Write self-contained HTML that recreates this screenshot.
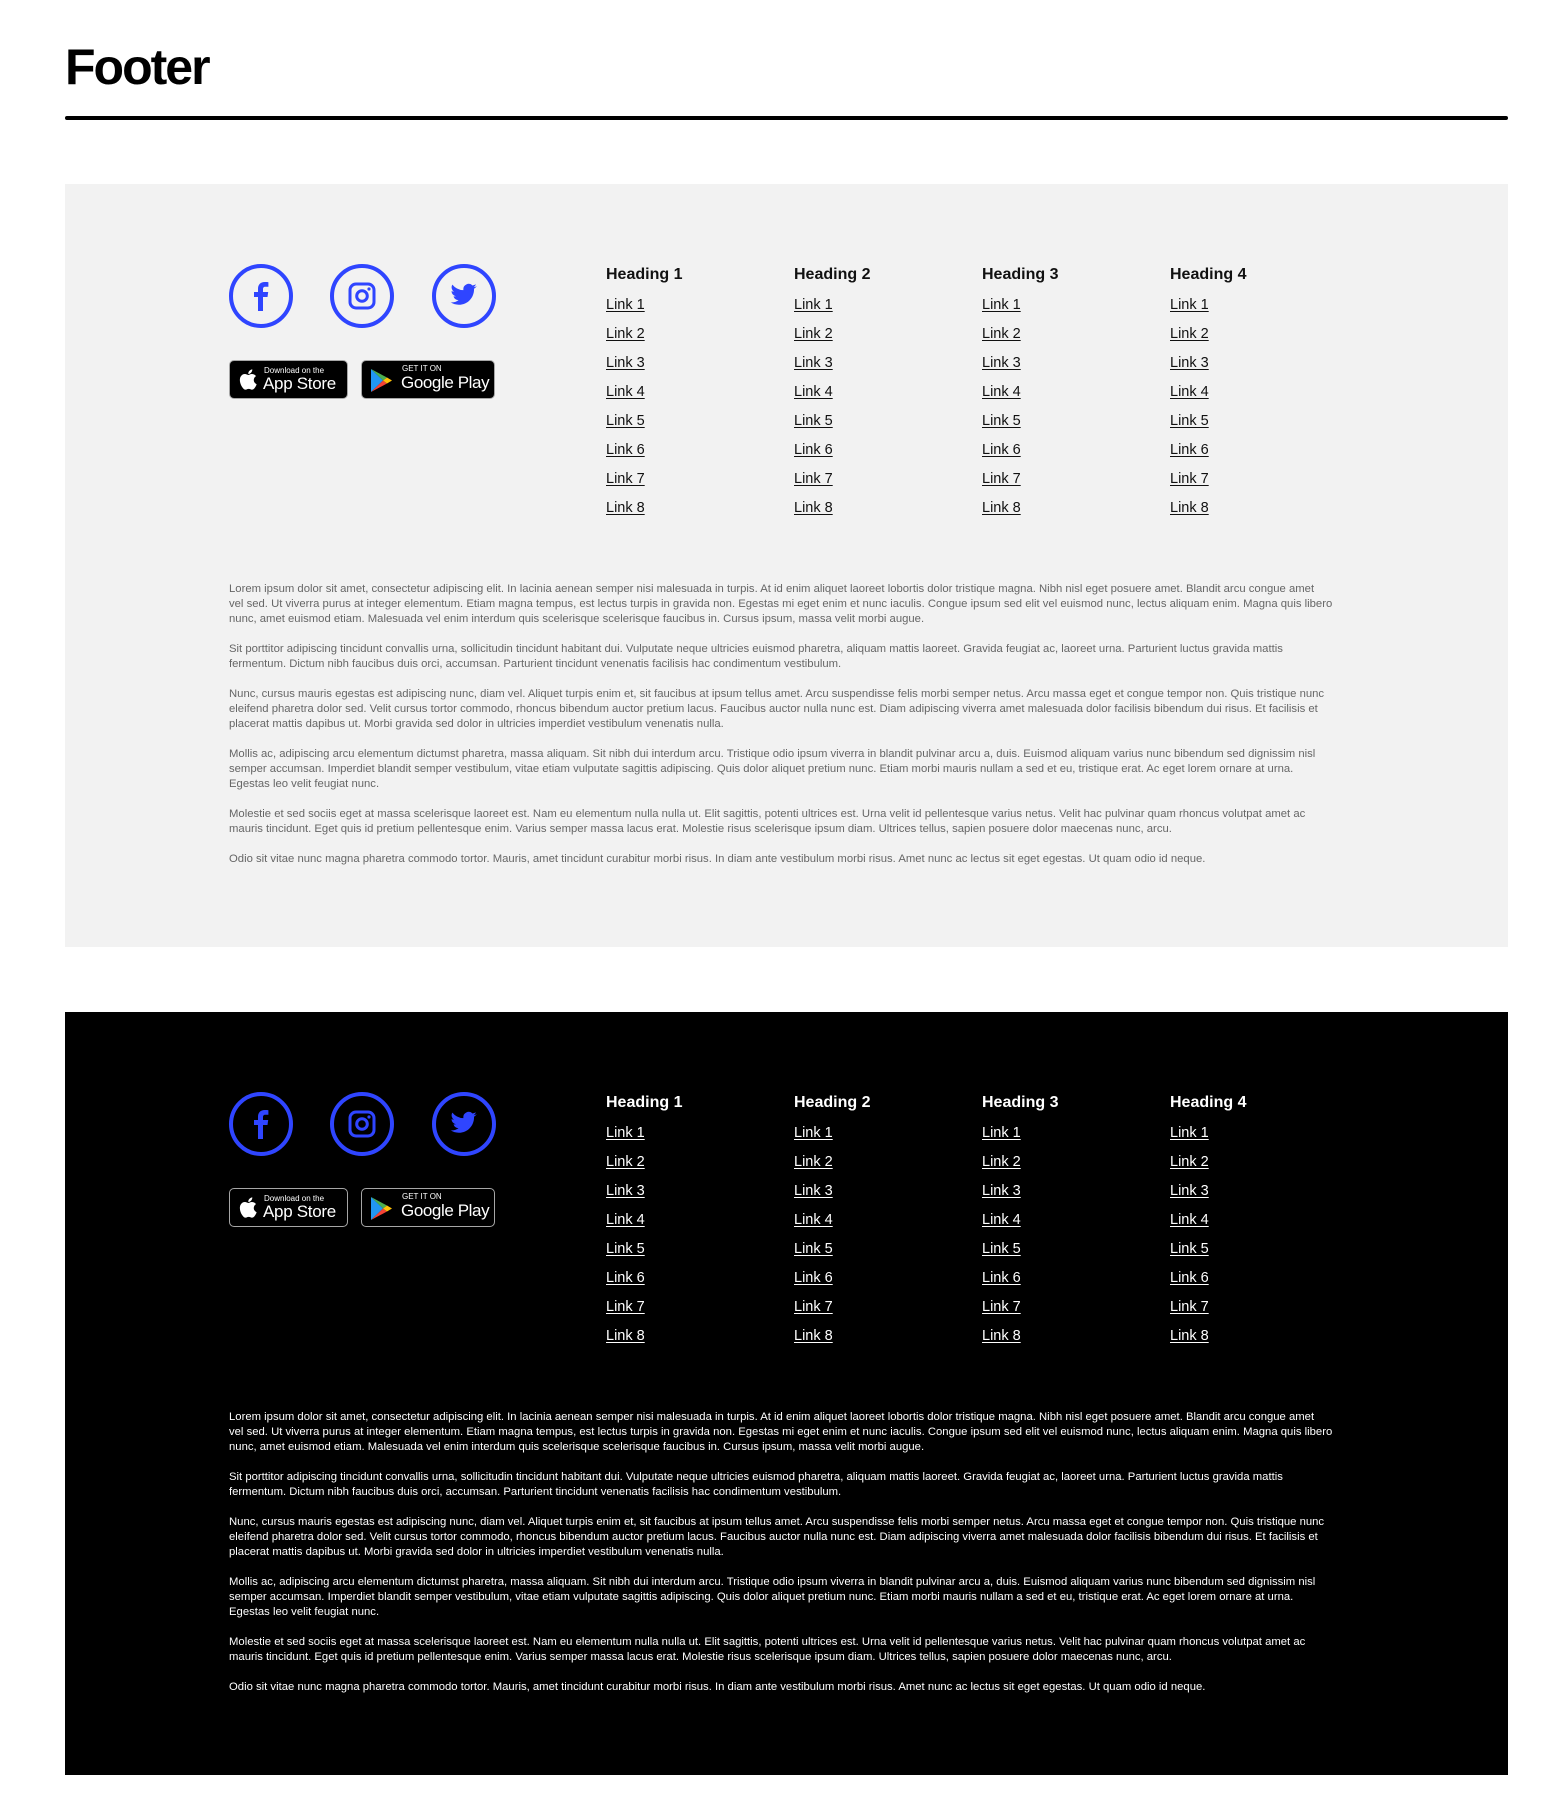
<!DOCTYPE html>
<html><head><meta charset="utf-8"><style>
*{margin:0;padding:0;box-sizing:border-box}
body{width:1568px;height:1802px;background:#fff;font-family:"Liberation Sans",sans-serif;position:relative;overflow:hidden}
h1{position:absolute;left:65px;top:38px;font-size:50px;font-weight:bold;letter-spacing:-2px;color:#000}
.rule{position:absolute;left:65px;top:116px;width:1443px;height:4px;background:#000;border-radius:2px}
.box{position:absolute;left:65px;width:1443px;height:763px}
.light{top:184px;background:#f2f2f2;color:#111}
.dark{top:1012px;background:#000;color:#fff}
.circ{position:absolute;top:80px;width:64px;height:64px;border:4px solid #2f45ff;border-radius:50%;display:flex;align-items:center;justify-content:center}
.badge{position:absolute;top:176px;height:39px;background:#000;border-radius:5px;border:1px solid #a6a6a6;color:#fff}
.col{position:absolute;top:81px}
.col h3{font-size:16px;font-weight:600;margin-top:0;height:26px;line-height:20px}
.col a{display:block;font-size:14.5px;line-height:29px;height:29px;color:inherit;text-decoration:underline;text-underline-offset:2px}
.txt{position:absolute;left:164px;top:398px;font-size:11.3px;line-height:15px;white-space:nowrap}
.light .txt{color:#666}
.txt p{margin-bottom:15px}
</style></head><body>
<h1>Footer</h1>
<div class="rule"></div>

<div class="box light" id="b1"></div>
<div class="box dark" id="b2"></div>

<template id="t">
<div class="circ" style="left:164px"><svg width="26" height="30" viewBox="0 0 26 30"><path d="M15 30V16h4.5l.7-5H15V8.2c0-1.5.5-2.500 2.600-2.500h2.800V1.200C20 1.100 18.400 1 16.600 1 12.700 1 10 3.400 10 7.700V11H6v5h4v14z" fill="#2f45ff"/></svg></div>
<div class="circ" style="left:265px"><svg width="30" height="30" viewBox="0 0 30 30"><rect x="3" y="3" width="24" height="24" rx="6" fill="none" stroke="#2f45ff" stroke-width="3"/><circle cx="15" cy="15" r="5.3" fill="none" stroke="#2f45ff" stroke-width="3"/><circle cx="22" cy="8" r="1.6" fill="#2f45ff"/></svg></div>
<div class="circ" style="left:367px"><svg width="28" height="26" viewBox="0 0 24 22"><path d="M23 2.5a9.6 9.6 0 0 1-2.8 1 4.6 4.6 0 0 0 2-2.6 9 9 0 0 1-2.9 1.1A4.6 4.6 0 0 0 11.5 6 13 13 0 0 1 2 1.2a4.6 4.6 0 0 0 1.4 6.1 4.5 4.5 0 0 1-2.1-.6 4.6 4.6 0 0 0 3.7 4.5 4.6 4.6 0 0 1-2 .1 4.6 4.6 0 0 0 4.3 3.2A9.2 9.2 0 0 1 .5 16.4 13 13 0 0 0 7.5 18.5c8.5 0 13.1-7 13.1-13.1v-.6A9.3 9.3 0 0 0 23 2.5z" fill="#2f45ff"/></svg></div>
<div class="badge" style="left:164px;width:119px">
 <svg style="position:absolute;left:9px;top:8px" width="18" height="21" viewBox="0 0 17 20"><path d="M14 10.6c0-2.5 2-3.7 2.1-3.8-1.2-1.7-3-1.9-3.6-2-1.5-.2-3 .9-3.7.9-.8 0-2-.9-3.2-.9C3.900 4.800 2.400 5.700 1.600 7.200c-1.800 3-.4 7.500 1.300 10 .8 1.200 1.800 2.600 3.100 2.500 1.300 0 1.700-.8 3.200-.8s1.900.8 3.200.8c1.300 0 2.200-1.200 3-2.400.9-1.400 1.300-2.700 1.300-2.800 0 0-2.600-1-2.700-3.900zM11.600 3.300c.7-.8 1.100-1.900 1-3-1 0-2.100.7-2.800 1.500-.6.700-1.200 1.800-1 2.900 1.100.1 2.100-.6 2.800-1.400z" fill="#fff"/></svg>
 <div style="position:absolute;left:34px;top:5px;font-size:8px;line-height:9px">Download on the</div>
 <div style="position:absolute;left:33px;top:13px;font-size:17px;line-height:20px;letter-spacing:-.3px">App Store</div>
</div>
<div class="badge" style="left:296px;width:134px">
 <svg style="position:absolute;left:8px;top:7px" width="23" height="25" viewBox="0 0 23 25"><path d="M1 1l12 11.5L1 24z" fill="#2196f3"/><path d="M1 1l16 8.5-4 3z" fill="#4caf50"/><path d="M1 24l16-8.5-4-3z" fill="#f44336"/><path d="M17 9.5l5 3-5 3-4-3z" fill="#ffc107"/></svg>
 <div style="position:absolute;left:40px;top:3px;font-size:8px;line-height:9px">GET IT ON</div>
 <div style="position:absolute;left:39px;top:12px;font-size:17px;line-height:20px;letter-spacing:-.4px">Google Play</div>
</div>
<div class="col" style="left:541px"><h3>Heading 1</h3><a>Link 1</a><a>Link 2</a><a>Link 3</a><a>Link 4</a><a>Link 5</a><a>Link 6</a><a>Link 7</a><a>Link 8</a></div>
<div class="col" style="left:729px"><h3>Heading 2</h3><a>Link 1</a><a>Link 2</a><a>Link 3</a><a>Link 4</a><a>Link 5</a><a>Link 6</a><a>Link 7</a><a>Link 8</a></div>
<div class="col" style="left:917px"><h3>Heading 3</h3><a>Link 1</a><a>Link 2</a><a>Link 3</a><a>Link 4</a><a>Link 5</a><a>Link 6</a><a>Link 7</a><a>Link 8</a></div>
<div class="col" style="left:1105px"><h3>Heading 4</h3><a>Link 1</a><a>Link 2</a><a>Link 3</a><a>Link 4</a><a>Link 5</a><a>Link 6</a><a>Link 7</a><a>Link 8</a></div>
<div class="txt">
<p>Lorem ipsum dolor sit amet, consectetur adipiscing elit. In lacinia aenean semper nisi malesuada in turpis. At id enim aliquet laoreet lobortis dolor tristique magna. Nibh nisl eget posuere amet. Blandit arcu congue amet<br>vel sed. Ut viverra purus at integer elementum. Etiam magna tempus, est lectus turpis in gravida non. Egestas mi eget enim et nunc iaculis. Congue ipsum sed elit vel euismod nunc, lectus aliquam enim. Magna quis libero<br>nunc, amet euismod etiam. Malesuada vel enim interdum quis scelerisque scelerisque faucibus in. Cursus ipsum, massa velit morbi augue.</p>
<p>Sit porttitor adipiscing tincidunt convallis urna, sollicitudin tincidunt habitant dui. Vulputate neque ultricies euismod pharetra, aliquam mattis laoreet. Gravida feugiat ac, laoreet urna. Parturient luctus gravida mattis<br>fermentum. Dictum nibh faucibus duis orci, accumsan. Parturient tincidunt venenatis facilisis hac condimentum vestibulum.</p>
<p>Nunc, cursus mauris egestas est adipiscing nunc, diam vel. Aliquet turpis enim et, sit faucibus at ipsum tellus amet. Arcu suspendisse felis morbi semper netus. Arcu massa eget et congue tempor non. Quis tristique nunc<br>eleifend pharetra dolor sed. Velit cursus tortor commodo, rhoncus bibendum auctor pretium lacus. Faucibus auctor nulla nunc est. Diam adipiscing viverra amet malesuada dolor facilisis bibendum dui risus. Et facilisis et<br>placerat mattis dapibus ut. Morbi gravida sed dolor in ultricies imperdiet vestibulum venenatis nulla.</p>
<p>Mollis ac, adipiscing arcu elementum dictumst pharetra, massa aliquam. Sit nibh dui interdum arcu. Tristique odio ipsum viverra in blandit pulvinar arcu a, duis. Euismod aliquam varius nunc bibendum sed dignissim nisl<br>semper accumsan. Imperdiet blandit semper vestibulum, vitae etiam vulputate sagittis adipiscing. Quis dolor aliquet pretium nunc. Etiam morbi mauris nullam a sed et eu, tristique erat. Ac eget lorem ornare at urna.<br>Egestas leo velit feugiat nunc.</p>
<p>Molestie et sed sociis eget at massa scelerisque laoreet est. Nam eu elementum nulla nulla ut. Elit sagittis, potenti ultrices est. Urna velit id pellentesque varius netus. Velit hac pulvinar quam rhoncus volutpat amet ac<br>mauris tincidunt. Eget quis id pretium pellentesque enim. Varius semper massa lacus erat. Molestie risus scelerisque ipsum diam. Ultrices tellus, sapien posuere dolor maecenas nunc, arcu.</p>
<p>Odio sit vitae nunc magna pharetra commodo tortor. Mauris, amet tincidunt curabitur morbi risus. In diam ante vestibulum morbi risus. Amet nunc ac lectus sit eget egestas. Ut quam odio id neque.</p>
</div>
</template>
<script>
var t=document.getElementById('t').innerHTML;
document.getElementById('b1').innerHTML=t;
document.getElementById('b2').innerHTML=t;
</script>
</body></html>
